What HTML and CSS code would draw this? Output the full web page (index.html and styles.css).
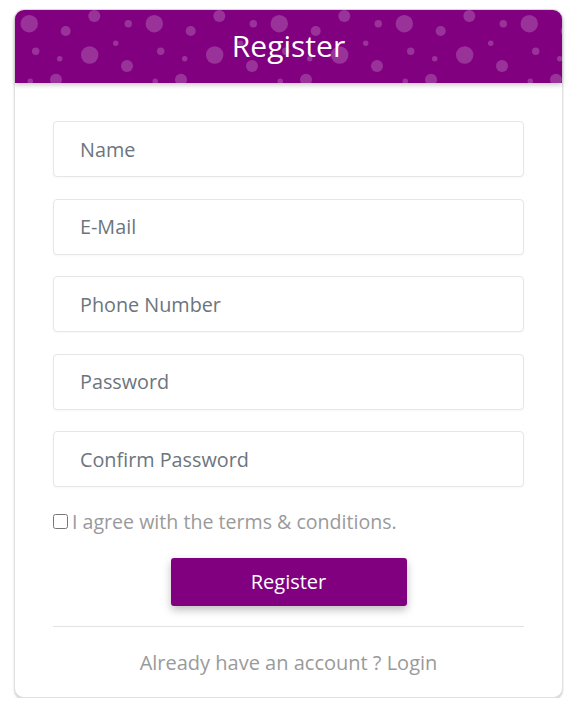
FILE: index.html
```html
<!DOCTYPE html>
<html>
<head>
<meta charset="utf-8">
<link rel="stylesheet" href="styles.css">
</head>
<body>
<div class="page">
  <div class="card">
    <div class="card-header">
      <svg class="bubbles" width="100%" height="100%" aria-hidden="true">
        <defs>
          <pattern id="bub" width="125" height="100" patternUnits="userSpaceOnUse">
            <g fill="#ffffff" fill-opacity="0.2">
              <circle cx="14.3" cy="13.7" r="8.7"/>
              <circle cx="79.3" cy="6" r="6"/>
              <circle cx="50.7" cy="21" r="5"/>
              <circle cx="113.3" cy="13.7" r="3.7"/>
              <circle cx="20.7" cy="41.3" r="3.7"/>
              <circle cx="74.7" cy="45" r="8.7"/>
              <circle cx="100.7" cy="33.3" r="2.7"/>
              <circle cx="44.7" cy="48.7" r="2.7"/>
              <circle cx="112" cy="56" r="6"/>
              <circle cx="41" cy="69.7" r="6"/>
              <circle cx="15.3" cy="71.3" r="2.7"/>
            </g>
          </pattern>
        </defs>
        <rect width="100%" height="100%" fill="url(#bub)"/>
      </svg>
      <h1 class="title">Register</h1>
    </div>
    <form class="card-body">
      <input class="field" type="text" placeholder="Name">
      <input class="field" type="email" placeholder="E-Mail">
      <input class="field" type="text" placeholder="Phone Number">
      <input class="field" type="password" placeholder="Password">
      <input class="field" type="password" placeholder="Confirm Password">
      <label class="agree"><input type="checkbox" class="check"> I agree with the terms &amp; conditions.</label>
      <div class="actions"><button type="button" class="btn">Register</button></div>
      <hr class="divider">
      <p class="login">Already have an account ? Login</p>
    </form>
  </div>
</div>
</body>
</html>
```

FILE: styles.css
```css
* { box-sizing: border-box; }
html, body { margin: 0; padding: 0; background: #ffffff; }
body { font-family: "Open Sans", "Lato", sans-serif; }
.page { padding: 9px 14px 0 14px; }
.card {
  border: 1px solid #e2e2e2;
  border-radius: 10px;
  box-shadow: 0 2px 2px rgba(0,0,0,0.18);
  background: #fff;
  height: 689px;
}
.card-header {
  position: relative;
  height: 73px;
  background: #800080;
  border-radius: 9px 9px 0 0;
  box-shadow: 0 2px 5px rgba(0,0,0,0.22);
  display: flex;
  align-items: center;
  justify-content: center;
  overflow: hidden;
}
.bubbles { position: absolute; left: 0; top: 0; }
.title {
  position: relative;
  margin: 0;
  color: #fff;
  font-family: "Open Sans", sans-serif;
  font-weight: 400;
  font-size: 30px;
  line-height: 1;
  padding-bottom: 2px;
}
.card-body {
  padding: 38px 38px 0 38px;
  display: flex;
  flex-direction: column;
}
.field {
  height: 56px;
  margin-bottom: 21.5px;
  border: 1px solid #e6e6e6;
  border-radius: 4px;
  padding: 0 26px;
  font-family: "Open Sans", sans-serif;
  font-size: 19.8px;
  color: #495057;
  outline: none;
  box-shadow: 0 1px 2px rgba(0,0,0,0.03);
}
.field::placeholder { color: #6c757d; opacity: 1; }
.agree {
  display: flex;
  align-items: center;
  margin-top: 1px;
  color: #9a9a9a;
  font-size: 19.6px;
  line-height: 24px;
  gap: 3px;
}
.check { margin: 0 1px 0 0; width: 15px; height: 15px; }
.actions { display: flex; justify-content: center; margin-top: 24px; }
.btn {
  width: 236px;
  height: 48px;
  background: #800080;
  border: none;
  border-radius: 3px;
  color: #fff;
  font-family: "Open Sans", sans-serif;
  font-size: 20px;
  box-shadow: 0 4px 8px rgba(0,0,0,0.25);
}
.divider { width: 100%; margin: 20px 0 0 0; border: 0; border-top: 1px solid #e3e3e3; }
.login {
  margin: 24px 0 0 0;
  text-align: center;
  color: #9a9a9a;
  font-size: 20px;
  line-height: 24px;
}
```
